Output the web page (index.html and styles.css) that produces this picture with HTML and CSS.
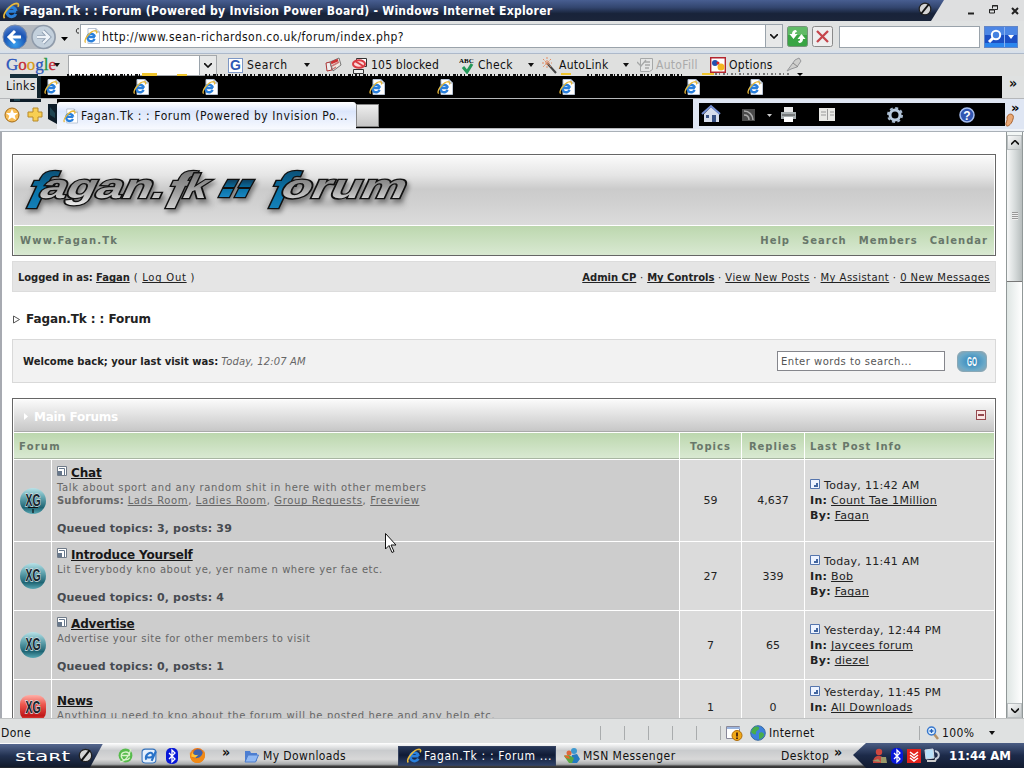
FILE: index.html
```
<!DOCTYPE html>
<html lang="en">
<head>
<meta charset="utf-8">
<title>Fagan.Tk : : Forum (Powered by Invision Power Board)</title>
<link rel="stylesheet" href="styles.css">
</head>
<body>
<svg class="defs" width="0" height="0">
<defs>
<linearGradient id="ball" x1="0" y1="0" x2="0" y2="1"><stop offset="0" stop-color="#b9e2e8"/><stop offset=".3" stop-color="#6fb0ba"/><stop offset=".75" stop-color="#1f6574"/><stop offset="1" stop-color="#5aa9b5"/></linearGradient>
<linearGradient id="redball" x1="0" y1="0" x2="0" y2="1"><stop offset="0" stop-color="#ffb0a8"/><stop offset=".35" stop-color="#ee5a50"/><stop offset=".8" stop-color="#c01818"/><stop offset="1" stop-color="#f06050"/></linearGradient>
<linearGradient id="metal" x1="0" y1="0" x2="0" y2="1"><stop offset="0" stop-color="#666"/><stop offset=".5" stop-color="#999"/><stop offset="1" stop-color="#eee"/></linearGradient>
<linearGradient id="blue" x1="0" y1="0" x2="0" y2="1"><stop offset="0" stop-color="#0d4060"/><stop offset=".5" stop-color="#0873a8"/><stop offset="1" stop-color="#1b86c0"/></linearGradient>
<radialGradient id="nav" cx=".5" cy=".8" r=".8"><stop offset="0" stop-color="#39a0ee"/><stop offset=".6" stop-color="#1b55b4"/><stop offset="1" stop-color="#5a86d0"/></radialGradient>
<symbol id="e" viewBox="0 0 16 16"><path d="M12.6 8.2H4.8M12.3 10.6A4.2 4.2 0 1 1 12.6 8" fill="none" stroke="#2a80dc" stroke-width="2.700"/><path d="M2.3 14.5C-.5 11 8 1.5 13 1.3c2.3 0 1.8 2 1 3" fill="none" stroke="#e9b93a" stroke-width="1.500"/></symbol>
<symbol id="page" viewBox="0 0 16 16"><path d="M4 .5h8l3.500 3.500v11.500H4z" fill="#fff" stroke="#b9c4d4"/><path d="M12 .5v3.500h3.500" fill="#dde6f2" stroke="#9aa9bf"/><use href="#e" x="-.5" y="1.500" width="14.500" height="14.500"/></symbol>
<symbol id="sub" viewBox="0 0 10 10"><path d="M.5.500h9v9h-9z" fill="#fff" stroke="#707b88"/><path d="M1 5h4v4H1z" fill="#66778c"/><path d="M2 2.500h5.500V9" fill="none" stroke="#66778c"/></symbol>
<symbol id="last" viewBox="0 0 10 10"><path d="M.5.500h9v9h-9z" fill="#edf3ff" stroke="#5575ad"/><path d="M8 4v4H4V6h2V4z" fill="#4266a0"/></symbol>
<symbol id="bt" viewBox="0 0 12 16"><rect width="12" height="16" rx="5" fill="#0818d8"/><path d="M3 5l6 6-3 3V2l3 3-6 6" fill="none" stroke="#fff" stroke-width="1.300"/></symbol>
<symbol id="slash" viewBox="0 0 14 14"><circle cx="7" cy="7" r="5.800" fill="#d4d4d4" stroke="#222" stroke-width="1.200"/><path d="M3 12L11 2" stroke="#111" stroke-width="2"/></symbol>
</defs>
</svg>
<div class="desktop">
<header class="titlebar">
  <div class="caption"><svg class="cap-e" width="18" height="18"><use href="#e"/></svg><h1>Fagan.Tk : : Forum (Powered by Invision Power Board) - Windows Internet Explorer</h1><svg class="cap-slash" width="14" height="14"><use href="#slash"/></svg></div>
  <svg class="winbtns" width="60" height="18" viewBox="0 0 60 18"><g fill="none" stroke="#222"><path d="M4 13.500h6" stroke-width="2"/><path d="M28.500 8.500v-3h5v4h-2.500M25.500 9.500h5v3.500h-5zM25 10h6M28 6h6"/><path d="M48 8l6 6M54 8l-6 6" stroke-width="2"/></g></svg>
</header>

<div class="address">
  <svg width="80" height="31" viewBox="0 0 80 31"><path d="M14 4h30c16 0 16 24 0 24H14z" fill="#b4b9bf"/><circle cx="15" cy="16" r="12" fill="url(#nav)" stroke="#7d8da8"/><path d="M21 16H9M15 10l-6 6 6 6" fill="none" stroke="#fff" stroke-width="3"/><circle cx="43.500" cy="16" r="11.500" fill="#c3d0dc" stroke="#8f9baa" stroke-width="1.500"/><path d="M37 16h12M43 10l6 6-6 6" fill="none" stroke="#8a9aae" stroke-width="4"/><path d="M37 16h12M43 10l6 6-6 6" fill="none" stroke="#eef3f8" stroke-width="2.400"/><path d="M61 16h7l-3.500 4z"/><path d="M79 8c-3-2-4 5 0 4" fill="none" stroke="#222"/></svg>
  <div class="url"><svg width="16" height="16"><use href="#page"/></svg><span>http://www.sean-richardson.co.uk/forum/index.php?</span><i class="drop"><svg width="8" height="5"><path d="M0 0l4 4 4-4" fill="none" stroke="#111" stroke-width="1.600"/></svg></i></div>
  <svg class="ref" width="21" height="21" viewBox="0 0 21 21"><rect x=".5" y=".5" width="20" height="20" rx="2" fill="#3aa544" stroke="#75937a"/><path d="M1 1h19v8H1z" fill="#7cc97f" opacity=".6"/><path d="M9 4c-3 0-4 2-4 4H2.500l4 5 4-5H8c0-1 0-2 2-2zM12 17c3 0 4-2 4-4h2.500l-4-5-4 5H13c0 1 0 2-2 2z" fill="#fff"/></svg>
  <svg class="stop" width="21" height="21" viewBox="0 0 21 21"><rect x=".5" y=".5" width="20" height="20" rx="2" fill="#eee" stroke="#8a8a8a"/><path d="M5 5l11 11M16 5L5 16" stroke="#c5454b" stroke-width="2.300"/></svg>
  <div class="searchbox"></div>
  <svg class="mag" width="34" height="22" viewBox="0 0 34 22"><rect x=".5" y=".5" width="33" height="21" fill="#1c4fc4" stroke="#6286c7"/><path d="M1 1h32v8H1z" fill="#4c86e4"/><path d="M1 17h32v4H1z" fill="#2b86ee"/><path d="M20.500 1v20" stroke="#8ab2f0"/><circle cx="12" cy="9" r="4.200" fill="#4381e0" stroke="#fff" stroke-width="2"/><path d="M9 12l-4 4" stroke="#fff" stroke-width="3"/><path d="M24 9h6l-3 4z" fill="#fff"/></svg>
</div>

<div class="google">
  <b class="glogo"><span class="gb">G</span><span class="gr">o</span><span class="gy">o</span><span class="gb">g</span><span class="gg">l</span><span class="gr">e</span></b><i class="tri"></i>
  <div class="gbox"><i class="drop"><svg width="8" height="5"><path d="M0 0l4 4 4-4" fill="none" stroke="#111" stroke-width="1.600"/></svg></i></div>
  <div class="gitem gi-search"><span class="gsq">G</span><span>Search</span></div><i class="tri t-search"></i>
  <svg class="gi-news" width="17" height="16" viewBox="0 0 17 16"><path d="M1 6l4-1 2 8-5 1z" fill="#eee" stroke="#a33"/><path d="M5 5l9-4 2 7-8 6z" fill="#f1e9df" stroke="#777"/><path d="M6 6l7-3" stroke="#c33" stroke-width="2.500"/><path d="M7 9l7-4M8 12l3-2" stroke="#c77" stroke-width="1.500"/></svg>
  <div class="gitem gi-block"><svg width="17" height="17" viewBox="0 0 17 17"><path d="M4.500 1.500h10v8h-10z" fill="#fff" stroke="#333"/><path d="M1.500 12.500h10v4h-10z" fill="#eee" stroke="#333"/><ellipse cx="7" cy="7" rx="6" ry="3.800" fill="#fbd8d8" stroke="#d93b42" stroke-width="2"/><path d="M3 4l8 5" stroke="#d93b42" stroke-width="2"/></svg><span>105 blocked</span></div>
  <div class="gitem gi-check"><svg width="17" height="17" viewBox="0 0 17 17"><text x="0" y="6" class="abc">ABC</text><path d="M4 10l4 5 5-8" fill="none" stroke="#24995a" stroke-width="3"/></svg><span>Check</span></div><i class="tri t-check"></i>
  <div class="gitem gi-auto"><svg width="16" height="17" viewBox="0 0 16 17"><path d="M6 6l9 10" stroke="#444" stroke-width="2"/><path d="M6 0v11M1 6h10M2 2l8 8M10 2l-8 8" stroke="#e28b62" stroke-dasharray="2 1"/></svg><span>AutoLink</span></div><i class="tri t-auto"></i>
  <div class="gitem gi-fill"><svg width="17" height="16" viewBox="0 0 17 16"><path d="M3.500 1.500h12v11l-3 2h-9z" fill="#e4e5e5" stroke="#a6a8a8"/><path d="M8 5h5M8 8h5M8 11h4M0 5l4 4 5-6" fill="none" stroke="#a6a8a8" stroke-width="1.300"/></svg><span>AutoFill</span></div>
  <div class="gitem gi-opt"><svg width="16" height="16" viewBox="0 0 16 16"><path d="M.7.700h14.600v14.600H.7z" fill="#fff" stroke="#b3252e" stroke-width="1.400"/><circle cx="5" cy="6" r="3" fill="#2550ae"/><circle cx="11" cy="10" r="3.500" fill="#f4b61f"/><circle cx="8" cy="6" r="1.500" fill="#d22"/></svg><span>Options</span></div>
  <svg class="gi-pen" width="16" height="16" viewBox="0 0 16 16"><path d="M1 14L9 3l4-2 2 3-4 6-6 2z" fill="#cfcfcd" stroke="#96979a"/><path d="M7 6l5 4" stroke="#888"/></svg>
</div>

<div class="links">
  <span class="lk">Links</span>
  <div class="linkrow"><svg><use href="#page"/></svg><svg><use href="#page"/></svg><svg><use href="#page"/></svg><svg><use href="#page"/></svg><svg><use href="#page"/></svg><svg><use href="#page"/></svg><svg><use href="#page"/></svg><svg><use href="#page"/></svg></div>
  <b class="chev">»</b>
</div>

<div class="tabs">
  <svg class="favs" width="57" height="30" viewBox="0 0 57 30"><path d="M10 0h31v3H10zM48 5h9v20l-9-5z" fill="#0d1c28"/><path d="M14 0h6v2h-6zM50 8l5 6v5l-5-3z" fill="#1d4250"/><circle cx="12" cy="16" r="7" fill="#f8bd55" stroke="#a46c18"/><path d="M12 10l1.800 4h4.200l-3.300 2.700 1.300 4.300-4-2.500-4 2.500 1.300-4.300L6 14h4.200z" fill="#fff"/><path d="M33 9h5v4h4v5h-4v4h-5v-4h-5v-5h5z" fill="#f8cf52" stroke="#b7892b"/></svg>
  <div class="tab"><svg width="15" height="16"><use href="#page"/></svg><span>Fagan.Tk : : Forum (Powered by Invision Po...</span></div>
  <div class="newtab"></div>
  <svg class="cmd" width="331" height="30" viewBox="0 0 331 30">
    <rect x="0" width="331" height="30" fill="#dfe6f3"/><rect x="6" y="4" width="306" height="23"/>
    <path d="M11 15l7-7 8 7v8H11z" fill="#d7ddec"/><path d="M9 15l9-8 9 8" fill="none" stroke="#7791d5" stroke-width="2"/><path d="M13 16h3v3h-3zM19 16h4v7h-4z" fill="#385083"/>
    <rect x="49" y="10" width="13" height="12" fill="#4a4a4a"/><path d="M51 12c5 0 9 4 9 9M51 16c3 0 5 2 5 5" fill="none" stroke="#aaa" stroke-width="1.500"/><path d="M74 15h5l-2.500 3z" fill="#ccc"/>
    <path d="M91 8h9v5h-9z" fill="#e8e8e8"/><path d="M88 13h15v7H88z" fill="#a9b0b2"/><path d="M91 18h9v5h-9z" fill="#fff"/><path d="M89 16h13" stroke="#444"/>
    <rect x="126" y="9" width="16" height="13" fill="#e9e9e6"/><path d="M134.500 10v11M128 13h5M128 16h5M137 13h4M137 16h4" stroke="#999"/>
    <circle cx="202" cy="16" r="5" fill="none" stroke="#b8c9dc" stroke-width="3"/><circle cx="202" cy="16" r="7" fill="none" stroke="#a9bbd0" stroke-width="2" stroke-dasharray="3 2.500"/>
    <circle cx="274" cy="16" r="7" fill="#3156b2" stroke="#a8bff0" stroke-width="1.500"/><text x="274" y="20.500" class="qm">?</text>
    <path d="M314 18c2-5 8-3 6 2-1 5-6 9-7 6-1-2 2-4 1-8" fill="#e9a876" stroke="#a86432"/>
    <text x="318" y="13" class="cv">»</text>
  </svg>
</div>
<div class="tabedge"></div>

<div class="view">
<main class="page">
  <section class="brand">
    <div class="logo"><svg width="420" height="69" viewBox="14 155 420 69" role="img" aria-label="Fagan.Tk :: Forum">
      <g class="shadow"><path d="M22 205L45 171h9M262 205l25-34h9" /><path d="M40 198h168M280 198h120" /></g>
      <g class="lt">
        <text transform="translate(21 207) skewX(-25)" class="big bl" textLength="22" lengthAdjust="spacingAndGlyphs">f</text>
        <text transform="translate(37 197) skewX(-25)" class="small" textLength="125" lengthAdjust="spacingAndGlyphs">agan.</text>
        <text transform="translate(160 207) skewX(-25)" class="big" textLength="21" lengthAdjust="spacingAndGlyphs">f</text>
        <text transform="translate(180 197) skewX(-25)" class="small" textLength="24" lengthAdjust="spacingAndGlyphs">k</text>
        <path class="bl" d="M228 179h10l-4 7h-10zM243 179h11l-4 7h-11zM223 188h10l-4 8h-10zM239 188h10l-4 8h-10z"/>
        <text transform="translate(263 207) skewX(-25)" class="big bl" textLength="22" lengthAdjust="spacingAndGlyphs">f</text>
        <text transform="translate(278 197) skewX(-25)" class="small" textLength="124" lengthAdjust="spacingAndGlyphs">orum</text>
      </g></svg></div>
    <nav class="menu"><span>Www.Fagan.Tk</span><div><a>Help</a><a>Search</a><a>Members</a><a>Calendar</a></div></nav>
  </section>
  <section class="user"><p class="who"><b>Logged in as: <u>Fagan</u></b> ( <u>Log Out</u> )</p><p class="tools"><b><u>Admin CP</u></b> · <b><u>My Controls</u></b> · <u>View New Posts</u> · <u>My Assistant</u> · <u>0 New Messages</u></p></section>
  <h2 class="crumb"><svg width="9" height="9"><path d="M1.500 1l6 3.500-6 3.500z" fill="#fff" stroke="#555"/></svg>Fagan.Tk : : Forum</h2>
  <section class="welcome"><p><b>Welcome back; your last visit was:</b> <em>Today, 12:07 AM</em></p><div class="query">Enter words to search...</div><svg class="go" width="30" height="21" viewBox="0 0 30 21"><text x="9.500" y="15.500" textLength="11" lengthAdjust="spacingAndGlyphs">GO</text></svg></section>
  <section class="board">
    <div class="head"><svg width="5" height="7"><path d="M0 0l4 3.500-4 3.500z" fill="#fff"/></svg><h3>Main Forums</h3><i class="minus"></i></div>
    <div class="grid">
      <div class="th wide">Forum</div><div class="th c">Topics</div><div class="th c">Replies</div><div class="th">Last Post Info</div>

      <div class="ico"><svg width="28" height="30" viewBox="0 0 28 30"><circle cx="14" cy="15" r="13" fill="url(#ball)"/><path d="M14 23v4M9 21.500h10" stroke="#111" stroke-width="1.200"/><text x="6.500" y="20" class="xg" textLength="15" lengthAdjust="spacingAndGlyphs">XG</text></svg></div>
      <div class="f f1"><h4><svg width="10" height="10"><use href="#sub"/></svg><u>Chat</u></h4><p>Talk about sport and any random shit in here with other members</p><p class="subs"><b>Subforums:</b> <u>Lads Room</u>, <u>Ladies Room</u>, <u>Group Requests</u>, <u>Freeview</u></p><b class="q">Queued topics: 3, posts: 39</b></div>
      <div class="n">59</div><div class="n">4,637</div>
      <div class="lp"><p><svg width="10" height="10"><use href="#last"/></svg>Today, 11:42 AM</p><p><b>In:</b> <u>Count Tae 1Million</u></p><p><b>By:</b> <u>Fagan</u></p></div>

      <div class="ico"><svg width="28" height="30" viewBox="0 0 28 30"><circle cx="14" cy="15" r="13" fill="url(#ball)"/><text x="6.500" y="20" class="xg" textLength="15" lengthAdjust="spacingAndGlyphs">XG</text></svg></div>
      <div class="f f2"><h4><svg width="10" height="10"><use href="#sub"/></svg><u>Introduce Yourself</u></h4><p>Lit Everybody kno about ye, yer name n where yer fae etc.</p><b class="q">Queued topics: 0, posts: 4</b></div>
      <div class="n">27</div><div class="n">339</div>
      <div class="lp"><p><svg width="10" height="10"><use href="#last"/></svg>Today, 11:41 AM</p><p><b>In:</b> <u>Bob</u></p><p><b>By:</b> <u>Fagan</u></p></div>

      <div class="ico"><svg width="28" height="30" viewBox="0 0 28 30"><circle cx="14" cy="15" r="13" fill="url(#ball)"/><text x="6.500" y="20" class="xg" textLength="15" lengthAdjust="spacingAndGlyphs">XG</text></svg></div>
      <div class="f f2"><h4><svg width="10" height="10"><use href="#sub"/></svg><u>Advertise</u></h4><p>Advertise your site for other members to visit</p><b class="q">Queued topics: 0, posts: 1</b></div>
      <div class="n">7</div><div class="n">65</div>
      <div class="lp"><p><svg width="10" height="10"><use href="#last"/></svg>Yesterday, 12:44 PM</p><p><b>In:</b> <u>Jaycees forum</u></p><p><b>By:</b> <u>diezel</u></p></div>

      <div class="ico"><svg width="28" height="30" viewBox="0 0 28 30"><rect x="1" y="2" width="26" height="26" rx="9" fill="url(#redball)"/><text x="6.500" y="20" class="xg" textLength="15" lengthAdjust="spacingAndGlyphs">XG</text></svg></div>
      <div class="f"><h4><u>News</u></h4><p>Anything u need to kno about the forum will be posted here and any help etc.</p></div>
      <div class="n">1</div><div class="n">0</div>
      <div class="lp"><p><svg width="10" height="10"><use href="#last"/></svg>Yesterday, 11:45 PM</p><p><b>In:</b> <u>All Downloads</u></p></div>
    </div>
  </section>
</main>
<aside class="scroll"><i class="sb up"><svg width="8" height="5"><path d="M0 4.500l4-4 4 4" fill="none" stroke="#111" stroke-width="1.600"/></svg></i><i class="thumb"><span></span></i><i class="track"></i><i class="sb"><svg width="8" height="5"><path d="M0 .5l4 4 4-4" fill="none" stroke="#111" stroke-width="1.600"/></svg></i></aside>
</div>

<footer class="status"><span class="done">Done</span><i></i><i></i><i></i><i></i><i></i><i class="nl"></i>
  <svg class="warn" width="17" height="16" viewBox="0 0 17 16"><path d="M.5 1.500h13v12H.5z" fill="#fff" stroke="#889"/><path d="M1 2h13v2H1z" fill="#9ab4de"/><circle cx="11" cy="10.500" r="5" fill="#f0a818" stroke="#b06c08"/><path d="M11 7.500v4M11 12.500v1.500" stroke="#421" stroke-width="1.800"/></svg>
  <svg class="globe" width="16" height="16" viewBox="0 0 16 16"><circle cx="8" cy="8" r="7.300" fill="#3c81dd" stroke="#386aa1"/><path d="M3 3c4-3 7-1 6 1s-3 1-3 4-3 1-5-1zM9 8c3-2 5 0 5 2s-3 4-5 4z" fill="#48ad4b"/></svg><span class="inet">Internet</span><i class="zline"></i>
  <svg class="zoom" width="13" height="14" viewBox="0 0 13 14"><path d="M8 8l4 5" stroke="#b59268" stroke-width="2.500"/><circle cx="5.500" cy="5" r="4" fill="#dff0ff" stroke="#3978cd" stroke-width="1.500"/><path d="M3.500 5h4M5.500 3v4" stroke="#225fb8" stroke-width="1.300"/></svg><span class="pct">100%</span><b class="tri"></b></footer>

<footer class="task">
  <div class="start"><svg width="63" height="20" viewBox="0 0 63 20"><text x="0" y="15" textLength="55" lengthAdjust="spacingAndGlyphs">staʀt</text></svg><svg width="15" height="15"><use href="#slash"/></svg></div>
  <div class="quick">
    <svg width="17" height="17" viewBox="0 0 16 16"><circle cx="8" cy="8" r="6.500" fill="#56bb4b"/><path d="M4 8h8M12 10c-2 3-7 3-8-1-.5-5 7-6 8-1M3 14C8 14 12 7 13 2" fill="none" stroke="#d9f2cb" stroke-width="1.200"/></svg>
    <svg width="17" height="17" viewBox="0 0 16 16"><rect x="1" y="2" width="13" height="13" rx="3" fill="#e4f0fd" stroke="#3472bc"/><path d="M5 12c-2-5 5-9 6-5s-6 3-6 2M10 13l4-9" fill="none" stroke="#2872c8" stroke-width="2"/></svg>
    <svg width="12" height="16"><use href="#bt"/></svg>
    <svg width="17" height="17" viewBox="0 0 16 16"><circle cx="8" cy="8" r="7" fill="#eb7414"/><circle cx="8.500" cy="6.500" r="4.500" fill="#3f62ab"/><path d="M1 4c1 7 4 8 7 6 2 0 4-1 6-7 3 7-1 12-6 12S0 11 1 4z" fill="#f08a16"/><path d="M3 3c0 5 4 5 6 4l-3 3-4-1z" fill="#ffc438"/></svg>
    <b>»</b>
  </div>
  <div class="tbtn dl"><svg width="15" height="14" viewBox="0 0 15 14"><path d="M1 12V2h5l1 2h6v8z" fill="#4c7ed2"/><path d="M1 13l3-7h10.500l-3 7z" fill="#91b9f3" stroke="#4d7dcc"/></svg><span>My Downloads</span></div>
  <div class="tbtn act"><svg width="16" height="16"><use href="#e"/></svg><span>Fagan.Tk : : Forum ...</span></div>
  <div class="tbtn msn"><svg width="17" height="16" viewBox="0 0 17 16"><circle cx="10" cy="3" r="3" fill="#3d98cf"/><circle cx="5" cy="5" r="2.500" fill="#dd673c"/><path d="M6 15l2-8 5-1 3 5-3 4z" fill="#237ac0"/><path d="M0 8l5-1 5 3-2 5H5z" fill="#58a845"/><path d="M0 7l5 1 1 3-4-1z" fill="#e36a2a"/></svg><span>MSN Messenger</span></div>
  <span class="desk">Desktop</span><b class="dchev">»</b>
  <div class="tray">
    <svg width="17" height="16" viewBox="0 0 17 16"><circle cx="8" cy="4" r="3.200" fill="#d0473f"/><path d="M2 15c0-6 4-8 7-7 5 1 5 6 4 7z" fill="#c5463e"/><path d="M1 13l6-2 3 3zM10 9l5 0 1 6h-6z" fill="#9a9a6b"/></svg>
    <svg width="12" height="16"><use href="#bt"/></svg>
    <svg width="14" height="14" viewBox="0 0 14 14"><path d="M0 0h14v14H0z" fill="#e3231d"/><path d="M3 3l4 3 4-3M3 6l4 3 4-3M3 9l4 3 4-3" fill="none" stroke="#fff" stroke-width="1.500"/></svg>
    <svg width="17" height="16" viewBox="0 0 17 16"><path d="M1 2l8-1 1 9-8 1z" fill="#b9e1fa" stroke="#d3dbe6"/><path d="M3 13h8l1-2" stroke="#ccc" stroke-width="2"/><path d="M11 3c5 1 5 7 0 8" fill="none" stroke="#c7cfdc" stroke-width="2"/></svg>
    <time>11:44 AM</time>
  </div>
</footer>
<svg class="residue" width="800" height="5" viewBox="0 0 800 5"><path d="M5 1h28v4H5z" fill="#16303c"/><path d="M62 2h76M200 2h342M582 2h96" stroke="#111" stroke-width="2" stroke-dasharray="2 2 1 3 3 1 1 2"/><path d="M710 1h75" stroke="#777" stroke-width="2" stroke-dasharray="2 2 1 3"/><path d="M137 0h15v3h-15zM172 1h10v2h-10zM556 0h10v2h-10zM697 0h12v2h-12z" fill="#f0c52d"/><path d="M798 0l-6 0 3 3z"/></svg>
<svg class="cursor" width="14" height="22" viewBox="0 0 14 22"><path d="M1.500 1.500v15.500l3.500-3.500 3 7 2-1-3-6.500H12z" fill="#fff" stroke="#111"/></svg>
</div>
</body>
</html>
```
FILE: styles.css
```
*{box-sizing:border-box}
body{margin:0;background:#dfe1e0;overflow:hidden;font-family:"DejaVu Sans","Noto Sans",sans-serif;font-size:11px;color:#222}
h1,h2,h3,h4,p{margin:0;font-size:inherit}
svg{display:block;flex:none}
i{font-style:normal}
.defs{position:absolute}
.desktop{width:1024px;height:768px;display:flex;flex-direction:column;position:relative;overflow:hidden}
.desktop>*{flex:none}
.titlebar,.address,.google,.links,.tabs,.status,.task{font-family:"DejaVu Sans Condensed","DejaVu Sans",sans-serif;font-size:12px;color:#111;white-space:nowrap}
.titlebar{height:21px;display:flex;background:#dedfe0}
.caption{width:944px;height:21px;display:flex;align-items:center;background:linear-gradient(#485e91,#33466f 35%,#18233a 65%,#1b253a);clip-path:polygon(0 0,100% 0,calc(100% - 13px) 100%,0 100%)}
.cap-e{margin-left:2px}
.caption h1{margin-left:3px;width:896px;color:#fff;font-size:12px;font-weight:bold;letter-spacing:.28px}
.cap-slash{margin:-3px 0 0 -1px}
.winbtns{margin-left:20px}
.address{height:32px;display:flex;background:linear-gradient(#e0e2e2 85%,#d5dfec)}
.url{width:703px;height:24px;margin-top:3px;border:1px solid #9aa3ab;background:#fff;display:flex;align-items:center}
.url>svg{margin-left:3px}
.url>span{margin:1px 0 0 2px;letter-spacing:.46px;flex:1}
.drop{width:17px;height:100%;background:#e7e8e8;border-left:1px solid #9aa3ab;display:grid;place-items:center}
.ref{margin:5px 0 0 4px}.stop{margin:5px 0 0 4px}
.searchbox{width:141px;height:22px;margin:5px 0 0 6px;border:1px solid #9aa3ab;background:#fff}
.mag{margin:5px 0 0 4px}
.google{height:23px;display:flex;align-items:center;border-top:1px solid #adb9ca;background:#dfe0df}
.glogo{width:48px;margin-left:6px;font:17px "Liberation Serif",serif;-webkit-text-stroke:.3px}
.gb{color:#2c56bb}.gr{color:#c52e36}.gy{color:#d99b19}.gg{color:#239441}
.tri{width:0;height:0;border:3px solid transparent;border-top:4px solid #111;border-bottom:0;flex:none}
.gbox{width:149px;height:21px;margin-left:8px;background:#fff;border:1px solid #a5a8ab;display:flex;justify-content:flex-end}
.gitem{display:flex;align-items:center;gap:4px;height:20px;letter-spacing:.3px}
.gi-search{width:70px;margin-left:11px;letter-spacing:.6px}
.gsq{width:15px;height:15px;background:#fff;border:1px solid #7d97c5;color:#2e58b4;font:bold 14px/13px "Liberation Sans",sans-serif;letter-spacing:0;text-align:center}
.t-search{margin-left:6px}
.gi-news{margin-left:15px}
.gi-block{width:95px;margin-left:10px;gap:2px;letter-spacing:.2px}
.gi-check{width:62px;margin-left:12px;gap:2px}
.abc{font:bold 7px "Liberation Serif",serif;letter-spacing:0}
.t-check{margin-left:7px}
.gi-auto{width:73px;margin-left:7px;gap:2px}
.t-auto{margin-left:9px}
.gi-fill{width:64px;margin-left:8px;gap:2px;color:#aaa}
.gi-opt{width:66px;margin-left:9px;gap:3px}
.gi-pen{margin-left:10px}
.links{height:23px;display:flex;align-items:center;border-bottom:1px solid #b5b7ba;background:#dfe1e1}
.lk{width:41px;height:22px;line-height:21px;padding-left:6px;letter-spacing:.4px;background:linear-gradient(90deg,#dfe1e1 37px,#10222b 37px)}
.linkrow{width:961px;height:22px;background:#000;display:grid;grid-template-columns:89px 69px 167px 68px 122px 125px 63px 1fr;align-items:center;padding-left:3px}
.linkrow svg{width:16px;height:16px}
.chev{font-size:14px;margin:-8px 0 0 7px}
.tabs{height:30px;display:flex;background:#000;border-bottom:1px solid #b5b7ba}
.favs{background:#dfe1e2}
.tab{width:299px;height:27px;margin-top:3px;background:linear-gradient(#fff,#dce6fb 35%,#f8faff);border-radius:3px 3px 0 0;display:flex;align-items:center;padding-left:6px;gap:3px}
.tab span{letter-spacing:.57px}
.newtab{width:23px;height:23px;margin-top:5px;background:linear-gradient(#eee,#c6c6c6);border:1px solid #858585}
.cmd{margin-left:auto}
.qm{font:bold 12px "Liberation Sans",sans-serif;fill:#fff;text-anchor:middle}
.cv{font:bold 13px "DejaVu Sans",sans-serif}
.tabedge{height:3px;background:#eef2f8;border-bottom:1px solid #a9b0b7}
.view{height:586px;display:flex;background:#fff;border-left:2px solid #a7aab1;overflow:hidden}
.page{width:1004px;padding:22px 10px 0;height:586px;overflow:hidden;white-space:nowrap}
.brand{width:984px;height:102px;border:1px solid #666;padding:1px;background:#fff}
.logo{height:69px;background:linear-gradient(#fafafa,#e5e5e5 28%,#cbcbcb 48%,#d1d1d1 70%,#dcdcdc)}
.logo svg,.ico svg{overflow:visible}
.shadow{fill:none;stroke:#777;stroke-width:5;opacity:.45;filter:blur(3px);transform:translate(4px,4px)}
.lt{fill:url(#metal);stroke:#111;stroke-width:2.600;paint-order:stroke;filter:drop-shadow(2px 3px 2px #0006)}
.lt .big{font:bold 51px "Liberation Sans",sans-serif}
.lt .small{font:bold 34px "Liberation Sans",sans-serif}
.lt .bl{fill:url(#blue)}
.menu{height:29px;margin-top:1px;background:linear-gradient(#bcd7ae,#d9e9d2);display:flex;justify-content:space-between;align-items:center;padding:0 6px;color:#68776a;font-weight:bold;font-size:10px;letter-spacing:1px}
.menu span{letter-spacing:1.180px}
.menu div{display:flex;gap:12px}
.user{width:984px;height:31px;margin-top:5px;background:#e5e5e5;border:1px solid #dcdcdc;display:flex;justify-content:space-between;align-items:center;padding:1px 5px 0;font-size:10px}
.user b{letter-spacing:0}
.who{letter-spacing:.75px}.who b{letter-spacing:-.08px}
.tools{letter-spacing:.45px}
u{text-decoration-thickness:1px;text-underline-offset:1px;text-decoration-skip-ink:none}
.crumb{display:flex;align-items:center;gap:5px;height:18px;margin-top:18px;font-size:12px;letter-spacing:-.1px}
.welcome{width:984px;height:44px;margin-top:11px;background:#f2f2f2;border:1px solid #d9d9d9;display:flex;align-items:center;padding:0 8px 0 10px;font-size:10px}
.welcome p{flex:1}
.welcome em{color:#666;letter-spacing:.13px}
.query{width:168px;height:20px;background:#fff;border:1px solid #85868c;color:#555;padding:3px;line-height:13px;letter-spacing:.5px}
.go{margin-left:12px;border:1px solid #8aa8b6;border-radius:6px;background:radial-gradient(#2882bd,#6ba9c8 65%,#93a5ae);fill:#fff;font:bold 14px "Liberation Sans",sans-serif}
.board{width:984px;margin-top:15px;border:1px solid #666;padding:1px;background:#fff}
.head{height:32px;display:flex;align-items:center;background:linear-gradient(#fafafa,#c7c7c7);border-bottom:1px solid #aaa;padding:2px 8px 0 10px;color:#fff}
.head h3{font-size:12px;margin-left:5px;flex:1;letter-spacing:-.27px}
.minus{width:10px;height:10px;margin-top:-3px;border:1px solid #95494f;background:#fae5e4;display:grid;place-items:center}
.minus::before{content:"";width:6px;height:2px;background:#95494f}
.grid{display:grid;grid-template-columns:37px 627px 61px 62px 189px;grid-template-rows:26px 81px 68px 68px 55px;gap:1px;margin-top:1px}
.grid>*{background:#dbdbdb}
.th{background:linear-gradient(#bcd7ae,#d9e9d2)!important;border-bottom:1px solid #a8b6a2;color:#68776a;font-size:10px;font-weight:bold;letter-spacing:1px;padding:8px 5px 0}
.wide{grid-column:1/3;letter-spacing:1.200px}.c{text-align:center;padding-left:0;padding-right:0}
.ico,.f{background:#cdcdcd!important}
.ico{display:grid;place-items:center}
.xg{font:bold 17px "Liberation Sans",sans-serif;fill:#16242c;stroke:#cfdde0;stroke-width:1.500;paint-order:stroke}
.f{padding-left:5px;display:flex;flex-direction:column;justify-content:center}
.f h4{display:flex;align-items:center;gap:4px;height:15px;font-size:12px;color:#171717;margin-bottom:1px;letter-spacing:-.15px}
.f h4 svg{margin-top:-3px}
.f p{font-size:10px;line-height:13px;color:#666;letter-spacing:.63px}
.f2 p{letter-spacing:.54px}
.subs b{letter-spacing:.17px}
.q{display:block;margin-top:14px;height:15px;line-height:15px;font-size:11px;color:#464a50;letter-spacing:.17px}
.n{display:grid;place-items:center}
.lp{padding-left:5px;display:flex;flex-direction:column;justify-content:center;line-height:15px;letter-spacing:.3px}
.lp:last-child{justify-content:flex-start;padding-top:5px}
.lp svg{display:inline-block;margin-right:4px}
.scroll{width:17px;height:586px;display:flex;flex-direction:column;border-left:1px solid #919898;border-right:1px solid #919898;background:#f3f7f6}
.sb{height:15px;background:linear-gradient(135deg,#f8f9f9,#c3c8c9);border:1px solid #b9bec0;display:grid;place-items:center;flex:none}
.up{margin-top:3px}
.thumb{height:132px;background:linear-gradient(90deg,#f7f8f8,#d5dada 55%,#b7bdbd);border-bottom:1px solid #777;display:grid;place-items:center}
.thumb span{width:6px;height:8px;background:repeating-linear-gradient(#999 0 1px,#eee 1px 2px)}
.track{flex:1;background:linear-gradient(90deg,#dfe6e4,#fff)}
.status{height:25px;display:flex;align-items:center;background:#dfe1e1;border-top:1px solid #bfc1c2;padding-top:3px}
.done{width:600px;padding-left:1px;letter-spacing:.4px}
.status i{width:24px;height:14px;border-left:1px solid #a9acad}
.status .nl{width:6px}
.globe{margin-left:7px}.inet{margin-left:3px;width:150px;letter-spacing:.35px}
.status .zline{width:6px}
.zoom{margin-left:1px}.pct{margin-left:3px;width:47px;letter-spacing:.4px}
.task{height:25px;display:flex;background:linear-gradient(#fff,#c9cbcd 30%,#d8d8d8 65%,#a9abac 85%,#3c3c3c 93%,#333);align-items:center}
.start{width:103px;height:24px;background:linear-gradient(#56688f,#21304f 50%,#101827);clip-path:polygon(0 0,100% 0,calc(100% - 13px) 100%,0 100%);display:flex;align-items:center;padding-left:15px}
.start text{font:14px "DejaVu Sans",sans-serif;fill:#fff}
.quick{width:130px;display:grid;grid-template-columns:24px 25px 23px 33px 1fr;align-items:center;padding-left:14px;height:23px}
.quick b{font-size:14px;margin-top:-8px}
.tbtn{height:24px;display:flex;align-items:center;gap:5px;letter-spacing:.38px}
.dl{width:154px;margin-left:11px;gap:4px}
.act{width:158px;height:20px;background:linear-gradient(#263657,#101b35 45%,#2e4167);color:#fff;padding-left:7px;gap:2px;border:1px solid #34415e;letter-spacing:.65px}
.msn{width:225px;padding-left:8px;gap:2px;letter-spacing:.48px}
.desk{width:53px;letter-spacing:.55px}.dchev{font-size:14px;width:19px;margin-top:-7px}
.tray{width:171px;height:25px;margin-left:auto;background:linear-gradient(#4b5d84,#1c2a49 50%,#121b2f);clip-path:polygon(0 48%,13px 0,100% 0,100% 100%,13px 100%);display:grid;grid-template-columns:20px 16px 17px 25px 1fr;align-items:center;padding-left:18px;color:#fff}
.tray time{font-weight:bold;font-size:13px}
.residue{position:absolute;left:5px;top:73px}
.cursor{position:absolute;left:384px;top:532px}
```
